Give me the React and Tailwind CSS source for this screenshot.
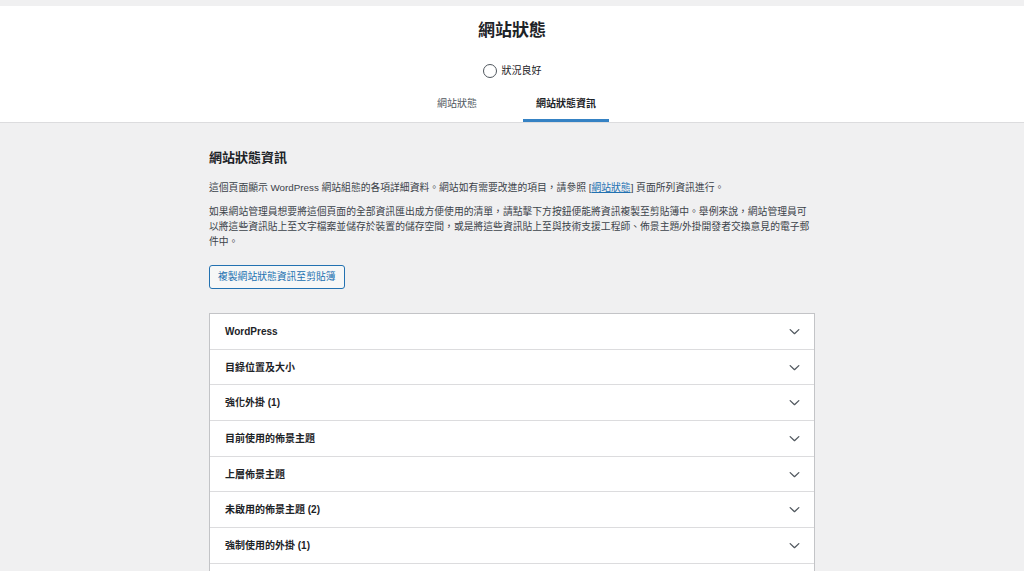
import React from 'react'

const sections = [
  'WordPress',
  '目錄位置及大小',
  '強化外掛 (1)',
  '目前使用的佈景主題',
  '上層佈景主題',
  '未啟用的佈景主題 (2)',
  '強制使用的外掛 (1)',
  '伺服器',
  '資料庫',
]

function Chevron() {
  return (
    <svg width="13" height="13" viewBox="0 0 24 24" fill="none" stroke="#50575e" strokeWidth="2.4" strokeLinecap="round" strokeLinejoin="round">
      <path d="M4 8.5l8 7.5 8-7.5" />
    </svg>
  )
}

export default function App() {
  const font = { fontFamily: '"Liberation Sans", "Noto Sans CJK TC", sans-serif' }
  return (
    <div className="min-h-screen bg-[#f0f0f1] text-[#1d2327] pt-[6px]" style={font}>
      {/* header */}
      <div className="bg-white border-b border-[#dcdcde]">
        <div className="flex flex-col items-center">
          <h1 className="text-[17px] font-bold leading-[24px] mt-[13px]">網站狀態</h1>
          <div className="flex items-center gap-[5px] mt-[19px] h-[18px]">
            <span className="w-[14px] h-[14px] rounded-full border-[1.5px] border-[#50575e]"></span>
            <span className="text-[10px] leading-[14px]">狀況良好</span>
          </div>
          <div className="flex mt-[5px] gap-[33px] ml-[9px]">
            <div className="px-[13px] h-[37px] flex items-center text-[10px] text-[#50575e]">網站狀態</div>
            <div className="px-[13px] h-[37px] flex items-center text-[10px] font-semibold border-b-[3px] border-[#3582c4] pt-[3px]">網站狀態資訊</div>
          </div>
        </div>
      </div>

      {/* body */}
      <div className="w-[606px] mx-auto pt-[26px]">
        <h2 className="text-[13px] font-bold leading-[18px]">網站狀態資訊</h2>
        <p className="text-[9.8px] leading-[15px] text-[#3c434a] mt-[13px]">
          這個頁面顯示 WordPress 網站組態的各項詳細資料。網站如有需要改進的項目，請參照 [<span className="text-[#2271b1] underline">網站狀態</span>] 頁面所列資訊進行。
        </p>
        <p className="text-[9.8px] leading-[15px] text-[#3c434a] mt-[9px]">
          如果網站管理員想要將這個頁面的全部資訊匯出成方便使用的清單，請點擊下方按鈕便能將資訊複製至剪貼簿中。舉例來說，網站管理員可以將這些資訊貼上至文字檔案並儲存於裝置的儲存空間，或是將這些資訊貼上至與技術支援工程師、佈景主題/外掛開發者交換意見的電子郵件中。
        </p>
        <button className="mt-[16px] h-[24px] px-[8px] border border-[#2271b1] rounded-[3px] bg-[#f6f7f7] text-[#2271b1] text-[9.8px] leading-[22px]">
          複製網站狀態資訊至剪貼簿
        </button>

        <div className="mt-[24px] border border-[#c3c4c7] bg-white">
          {sections.map((s) => (
            <div key={s} className="h-[35.7px] flex items-center justify-between pl-[15px] pr-[13px] border-b border-[#dcdcde]">
              <span className="text-[10px] font-semibold">{s}</span>
              <Chevron />
            </div>
          ))}
        </div>
      </div>
    </div>
  )
}
